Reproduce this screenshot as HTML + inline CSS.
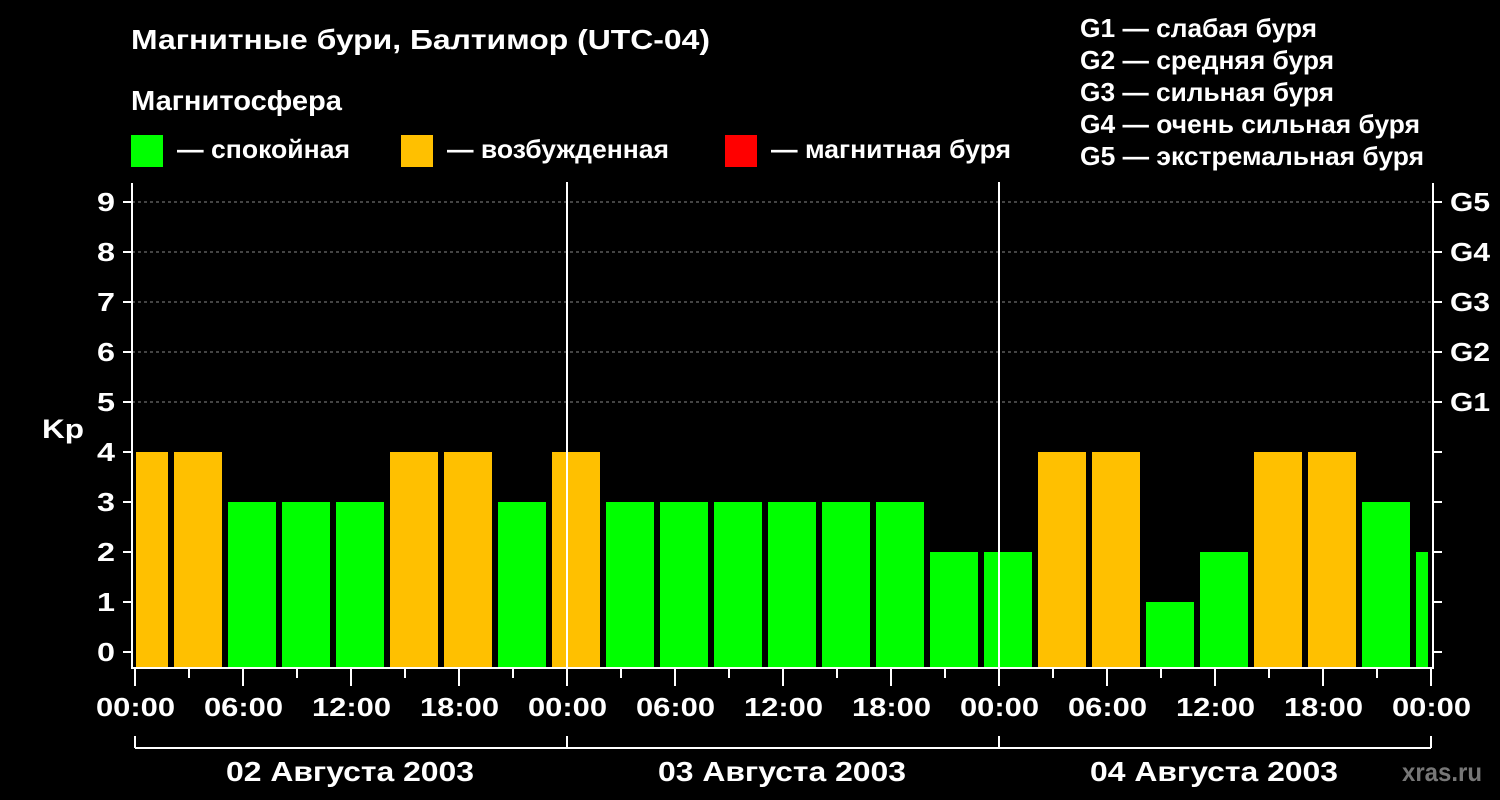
<!DOCTYPE html>
<html><head><meta charset="utf-8"><style>
html,body{margin:0;padding:0;background:#000;}
svg{display:block;}
text{font-family:"Liberation Sans",Arial,sans-serif;font-weight:bold;fill:#fff;}
</style></head><body>
<svg width="1500" height="800" viewBox="0 0 1500 800" xmlns="http://www.w3.org/2000/svg">
<rect width="1500" height="800" fill="#000"/>
<text x="131" y="49" font-size="27.5" textLength="579" lengthAdjust="spacingAndGlyphs">Магнитные бури, Балтимор (UTC-04)</text>
<text x="131" y="110" font-size="27.5" textLength="211" lengthAdjust="spacingAndGlyphs">Магнитосфера</text>
<rect x="131" y="135" width="32" height="32" fill="#00ff00"/>
<text x="177" y="158" font-size="26" textLength="173" lengthAdjust="spacingAndGlyphs">— спокойная</text>
<rect x="401" y="135" width="32" height="32" fill="#ffc000"/>
<text x="447" y="158" font-size="26" textLength="222" lengthAdjust="spacingAndGlyphs">— возбужденная</text>
<rect x="725" y="135" width="32" height="32" fill="#ff0000"/>
<text x="771" y="158" font-size="26" textLength="240" lengthAdjust="spacingAndGlyphs">— магнитная буря</text>
<g font-size="26">
<text x="1080" y="37" textLength="237" lengthAdjust="spacingAndGlyphs">G1 — слабая буря</text>
<text x="1080" y="69" textLength="254" lengthAdjust="spacingAndGlyphs">G2 — средняя буря</text>
<text x="1080" y="101" textLength="254" lengthAdjust="spacingAndGlyphs">G3 — сильная буря</text>
<text x="1080" y="133" textLength="340" lengthAdjust="spacingAndGlyphs">G4 — очень сильная буря</text>
<text x="1080" y="165" textLength="344" lengthAdjust="spacingAndGlyphs">G5 — экстремальная буря</text>
</g>
<g stroke="#888" stroke-width="1" stroke-dasharray="3,3">
<line x1="132" y1="202" x2="1432" y2="202"/>
<line x1="132" y1="252" x2="1432" y2="252"/>
<line x1="132" y1="302" x2="1432" y2="302"/>
<line x1="132" y1="352" x2="1432" y2="352"/>
<line x1="132" y1="402" x2="1432" y2="402"/>
</g>
<g id="bars"></g>
<g stroke="#fff" stroke-width="2" fill="none">
<line x1="567" y1="182" x2="567" y2="668"/>
<line x1="999" y1="182" x2="999" y2="668"/>
<polyline points="132,183 132,668 1433,668 1433,183"/>
<line x1="135" y1="736" x2="135" y2="748"/>
<line x1="567" y1="736" x2="567" y2="748"/>
<line x1="999" y1="736" x2="999" y2="748"/>
<line x1="1431" y1="736" x2="1431" y2="748"/>
<line x1="135" y1="748" x2="1431" y2="748"/>
</g>
<g id="ticks" stroke="#fff" stroke-width="2"></g>
<g id="lbl" font-size="26"></g>
<text x="42" y="438" font-size="27" textLength="42" lengthAdjust="spacingAndGlyphs">Kp</text>
<g font-size="27.5">
<text x="226" y="781" textLength="248" lengthAdjust="spacingAndGlyphs">02 Августа 2003</text>
<text x="658" y="781" textLength="248" lengthAdjust="spacingAndGlyphs">03 Августа 2003</text>
<text x="1090" y="781" textLength="248" lengthAdjust="spacingAndGlyphs">04 Августа 2003</text>
</g>
<text x="1402" y="781" font-size="26" style="fill:#777" textLength="80" lengthAdjust="spacingAndGlyphs">xras.ru</text>
</svg>
<script>
var ns="http://www.w3.org/2000/svg";
function el(p,t,a,txt){var e=document.createElementNS(ns,t);for(var k in a)e.setAttribute(k,a[k]);if(txt)e.textContent=txt;document.getElementById(p).appendChild(e);}
var v=[4,4,3,3,3,4,4,3,4,3,3,3,3,3,3,2,2,4,4,1,2,4,4,3,2];
for(var i=0;i<v.length;i++){var x1,x2;if(i==0){x1=136;x2=168;}else{x1=174+54*(i-1);x2=x1+48;}if(x2>1428)x2=1428;
var c=v[i]>=5?"#ff0000":(v[i]>=4?"#ffc000":"#00ff00");var y=652-50*v[i];
el("bars","rect",{x:x1,y:y,width:x2-x1,height:667-y,fill:c});}
for(var k=0;k<=9;k++){var y=652-50*k;el("ticks","line",{x1:123,y1:y,x2:132,y2:y});el("ticks","line",{x1:1433,y1:y,x2:1442,y2:y});
el("lbl","text",{x:97,y:y+9,textLength:18,lengthAdjust:"spacingAndGlyphs"},String(k));}
var g=["G1","G2","G3","G4","G5"];for(var k=0;k<5;k++){el("lbl","text",{x:1450,y:411-50*k,textLength:40,lengthAdjust:"spacingAndGlyphs"},g[k]);}
var tl=["00:00","06:00","12:00","18:00"];
for(var k=0;k<=24;k++){var x=135+54*k;var lab=(k%2==0);el("ticks","line",{x1:x,y1:668,x2:x,y2:lab?686:678});
if(lab){var t=(k==24)?"00:00":tl[(k/2)%4];el("lbl","text",{x:x-39,y:716,textLength:79,lengthAdjust:"spacingAndGlyphs"},t);}}
</script>
</body></html>
